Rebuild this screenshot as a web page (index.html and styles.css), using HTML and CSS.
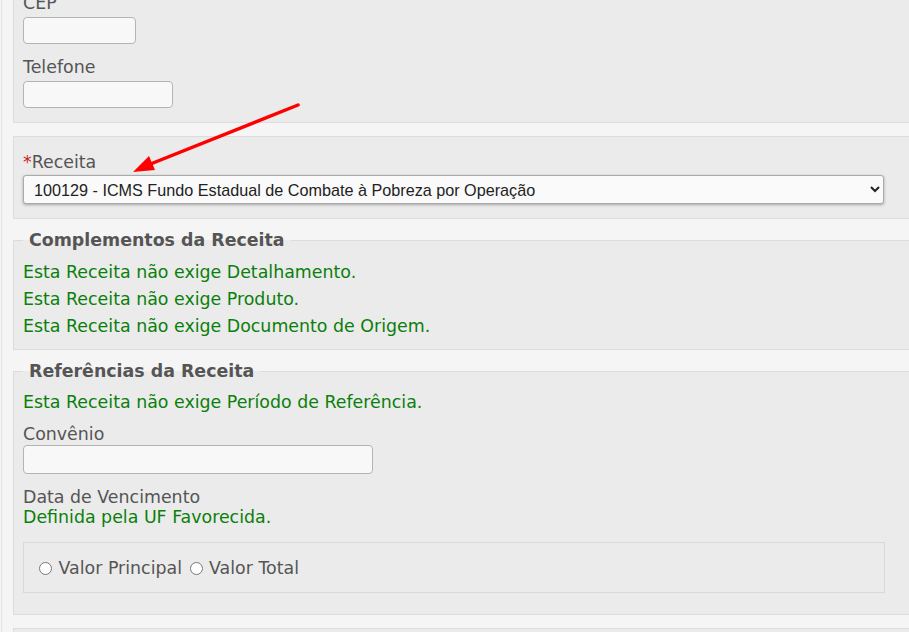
FILE: index.html
```html
<!DOCTYPE html>
<html lang="pt-BR">
<head>
    <meta charset="UTF-8">
    <title>GNRE</title>
    <link rel="stylesheet" href="styles.css">
</head>
<body>
    <div id="page">
        <!-- Emitente (parte final) -->
        <div class="panel first">
            <div class="field">
                <label class="lbl">CEP</label>
                <input type="text" class="txt cep">
            </div>
            <div class="field">
                <label class="lbl">Telefone</label>
                <input type="text" class="txt fone">
            </div>
        </div>

        <!-- Receita -->
        <div class="panel">
            <div class="field">
                <label class="lbl rec"><span class="req">*</span>Receita</label>
                <select class="sel">
                    <option>100129 - ICMS Fundo Estadual de Combate à Pobreza por Operação</option>
                </select>
            </div>
        </div>

        <fieldset class="panel group">
            <legend>Complementos da Receita</legend>
            <p class="ok">Esta Receita não exige Detalhamento.</p>
            <p class="ok">Esta Receita não exige Produto.</p>
            <p class="ok">Esta Receita não exige Documento de Origem.</p>
        </fieldset>

        <fieldset class="panel group refs">
            <legend>Referências da Receita</legend>
            <p class="ok">Esta Receita não exige Período de Referência.</p>
            <div class="field conv">
                <label class="lbl">Convênio</label>
                <input type="text" class="txt convenio">
            </div>
            <div class="venc">
                <span class="lbl">Data de Vencimento</span>
                <span class="ok">Definida pela UF Favorecida.</span>
            </div>
            <div class="valores">
                <label><input type="radio" name="valor"> Valor Principal</label>
                <label class="total"><input type="radio" name="valor"> Valor Total</label>
            </div>
        </fieldset>

        <div class="panel last"></div>
    </div>

    <!-- seta de destaque -->
    <svg class="arrow" width="909" height="632" viewBox="0 0 909 632">
        <line x1="298" y1="105" x2="148" y2="165" stroke="#f00" stroke-width="3.5" stroke-linecap="round"/>
        <polygon points="133,172 149,156 155,170" fill="#f00"/>
    </svg>
</body>
</html>
```

FILE: styles.css
```css
html, body {
    margin: 0;
    height: 632px;
    overflow: hidden;
    background: #f5f5f5;
}
body {
    font-family: "DejaVu Sans", Verdana, sans-serif;
    font-size: 17.4px;
    color: #555;
}
#page {
    width: 940px;
    margin-top: -8px;
    margin-left: 1px;
    padding-left: 11px;
    border-left: 1px solid #e4e4e4;
}
.panel {
    background: #ebebeb;
    border: 1px solid #dcdcdc;
    border-right: none;
    padding: 15px 9px 14px 9px;
    margin: 13px 0 0 0;
}
.panel.first {
    margin-top: 0;
    padding-top: 0;
}
.field .lbl {
    display: block;
    line-height: 20px;
    margin-bottom: 4px;
}
.field .lbl.rec {
    margin-bottom: 3px;
}
.field + .field {
    margin-top: 13px;
}
.req {
    color: #cc2222;
}
.txt {
    display: block;
    box-sizing: border-box;
    height: 27px;
    background: #f8f8f8;
    border: 1px solid #b4b4b4;
    border-radius: 4px;
    margin: 0;
}
.cep { width: 113px; }
.fone { width: 150px; }
.convenio { width: 350px; height: 29px; }
.sel {
    display: block;
    width: 861px;
    height: 29px;
    box-sizing: border-box;
    margin: 0;
    padding: 0 6px;
    font-family: "Liberation Sans", Arial, sans-serif;
    font-size: 16.2px;
    color: #222;
    background: #fafafa;
    border: 1px solid #aaa;
    border-radius: 3px;
    box-shadow: 0 1px 3px rgba(0,0,0,0.3);
}
fieldset.group {
    margin-top: 12px;
    padding: 10px 9px 9px 9px;
    min-width: 0;
}
legend {
    font-weight: bold;
    line-height: 18px;
    padding: 0 6px;
    color: #555;
}
.ok {
    margin: 0;
    line-height: 27px;
    color: #0b7f0b;
}
fieldset.refs {
    padding-top: 9px;
    padding-bottom: 21px;
}
.conv {
    margin-top: 8px;
}
.conv .lbl {
    margin-bottom: 1px;
}
.venc {
    margin-top: 13px;
    line-height: 20px;
}
.venc span {
    display: block;
}
.venc .ok {
    line-height: 21px;
}
.valores {
    box-sizing: border-box;
    width: 862px;
    margin-top: 14px;
    border: 1px solid #d8d8d8;
    padding: 15px 10px 13px 10px;
    line-height: 21px;
}
.valores input {
    margin: 0 1px 0 5px;
    vertical-align: -1px;
}
.valores .total input {
    margin-left: 2px;
}
.last {
    height: 40px;
}
.arrow {
    position: absolute;
    top: 0;
    left: 0;
}
```
